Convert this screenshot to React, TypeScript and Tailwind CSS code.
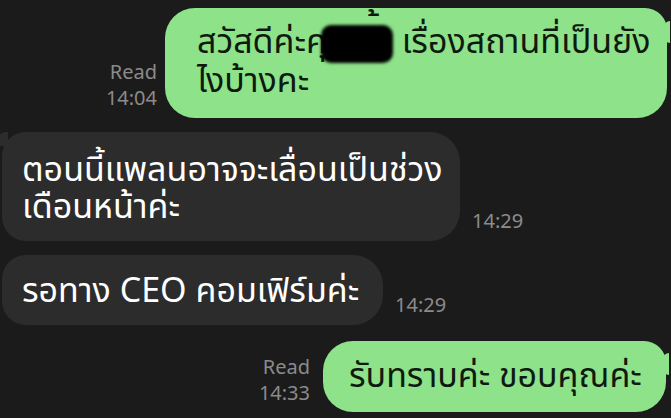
import React from "react";

const font = { fontFamily: '"Noto Sans Thai", "Noto Sans", "Liberation Sans", sans-serif' };

const Meta = ({ read, time }: { read?: boolean; time: string }) => (
  <div className="flex flex-col items-end text-[20px] leading-[26px] text-[#8b8b8b]">
    {read ? <span>Read</span> : null}
    <span>{time}</span>
  </div>
);

const App = () => {
  return (
    <div className="w-[671px] h-[418px] overflow-hidden bg-[#1b1b1b] flex flex-col gap-[14px] pt-[8px]" style={font}>
      <div className="flex flex-row justify-end items-end gap-[8px] pr-[4px]">
        <div className="pb-[6px]">
          <Meta read time="14:04" />
        </div>
        <div className="relative w-[502px] h-[110px] rounded-[30px] rounded-tr-[22px] bg-[#8de28a] pl-[32px] pt-[16px] text-[34px] leading-[37px] text-[#0f1a0e] whitespace-nowrap">
          <span>สวัสดีค่ะคุ</span>
          <span className="relative inline-block w-[72px] h-[38px] align-middle -ml-[6px]">
            <span className="absolute right-[12px] -top-[16px] text-[34px]">้</span>
            <span className="absolute inset-0 rounded-[10px] bg-black blur-[1.5px]" />
          </span>
          <span> เรื่องสถานที่เป็นยัง</span>
          <br />
          <span>ไงบ้างคะ</span>
          <div className="absolute -right-[3px] top-[13px] w-[6px] h-[22px] rounded-l-full bg-[#8de28a]" />
        </div>
      </div>

      <div className="flex flex-row items-end gap-[12px]">
        <div className="relative ml-[2px] w-[458px] h-[109px] rounded-r-[30px] rounded-l-[24px] bg-[#2c2c2c] pl-[20px] pt-[20px] text-[34px] leading-[37px] text-white whitespace-nowrap">
          ตอนนี้แพลนอาจจะเลื่อนเป็นช่วง
          <br />
          เดือนหน้าค่ะ
          <div className="absolute -left-[4px] top-[0px] w-[10px] h-[14px] rounded-tl-[8px] bg-[#2c2c2c]" />
        </div>
        <div className="pb-[6px]">
          <Meta time="14:29" />
        </div>
      </div>

      <div className="flex flex-row items-end gap-[12px]">
        <div className="ml-[2px] w-[381px] h-[70px] rounded-r-[30px] rounded-l-[24px] bg-[#2c2c2c] pl-[20px] pt-[2px] flex items-center text-[34px] leading-[37px] text-white whitespace-nowrap">
          รอทาง CEO คอมเฟิร์มค่ะ
        </div>
        <div className="pb-[6px]">
          <Meta time="14:29" />
        </div>
      </div>

      <div className="flex flex-row justify-end items-end gap-[13px] pt-[2px] pr-[5px]">
        <div className="pb-[5px]">
          <Meta read time="14:33" />
        </div>
        <div className="relative w-[343px] h-[71px] rounded-[30px] rounded-tr-[22px] bg-[#8de28a] pl-[26px] flex items-center text-[34px] leading-[37px] text-[#0f1a0e] whitespace-nowrap">
          รับทราบค่ะ ขอบคุณค่ะ
          <div className="absolute -right-[3px] top-[12px] w-[6px] h-[22px] rounded-l-full bg-[#8de28a]" />
        </div>
      </div>
    </div>
  );
};

export default App;
